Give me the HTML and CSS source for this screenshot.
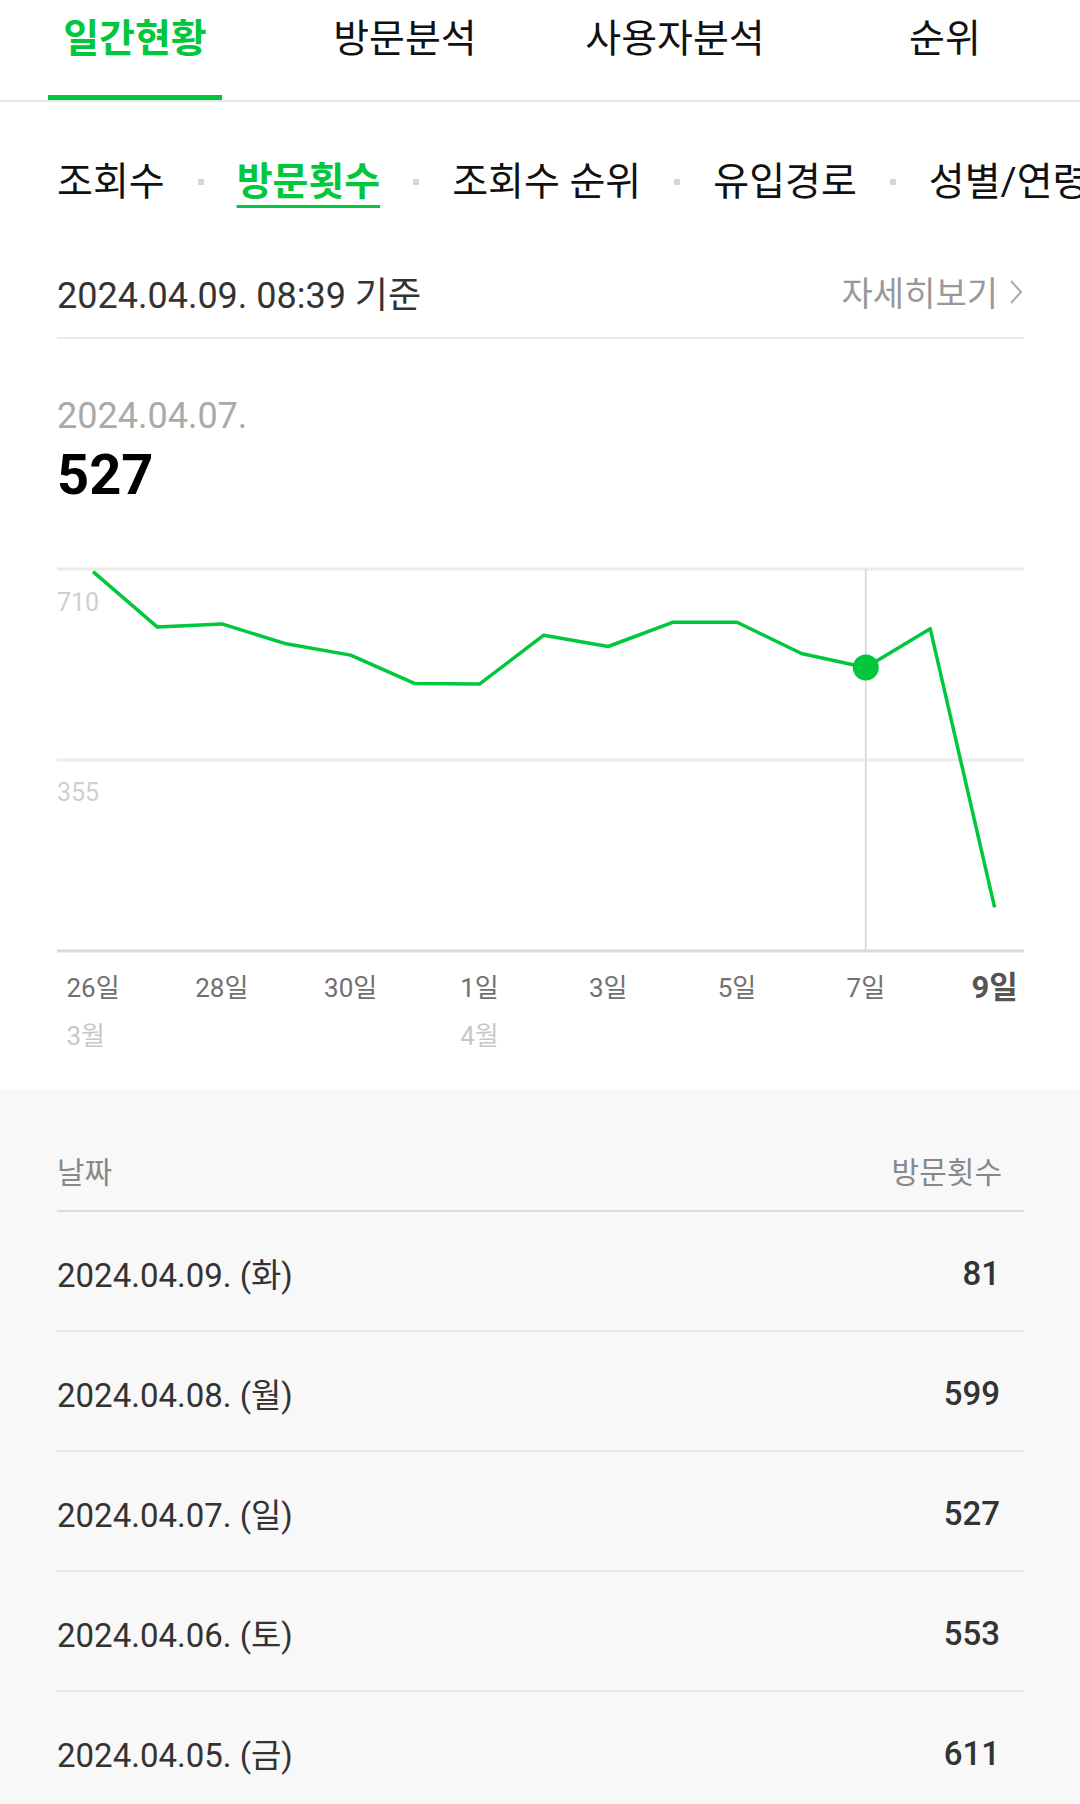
FILE: index.html
```html
<!DOCTYPE html>
<html lang="ko">
<head>
    <meta charset="UTF-8">
    <meta name="viewport" content="width=device-width, initial-scale=1.0">
    <title>일간현황 - 방문횟수</title>
    <link rel="stylesheet" href="styles.css">
</head>
<body>
    <nav class="main-tabs">
        <a class="main-tab active"><span>일간현황</span></a>
        <a class="main-tab"><span>방문분석</span></a>
        <a class="main-tab"><span>사용자분석</span></a>
        <a class="main-tab"><span>순위</span></a>
    </nav>

    <div class="sub-tabs">
        <span class="sub-tab">조회수</span>
        <i class="sub-sep"></i>
        <span class="sub-tab active">방문횟수</span>
        <i class="sub-sep"></i>
        <span class="sub-tab">조회수 순위</span>
        <i class="sub-sep"></i>
        <span class="sub-tab">유입경로</span>
        <i class="sub-sep"></i>
        <span class="sub-tab">성별/연령</span>
    </div>

    <section class="summary">
        <div class="basis-row">
            <span class="basis">2024.04.09. 08:39 기준</span>
            <a class="more">자세히보기
                <svg class="chevron" width="16" height="28" viewBox="0 0 16 28">
                    <path d="M3 3 L13 14 L3 25" fill="none" stroke="#aaa" stroke-width="2"/>
                </svg>
            </a>
        </div>

        <div class="selected">
            <div class="sel-date">2024.04.07.</div>
            <div class="sel-value">527</div>
        </div>

        <div class="chart">
            <svg class="chart-svg" width="967" height="395" viewBox="0 0 967 395">
                <line class="grid" x1="0" y1="10" x2="967" y2="10"/>
                <line class="grid" x1="0" y1="201" x2="967" y2="201"/>
                <text class="y-label" x="0" y="52">710</text>
                <text class="y-label" x="0" y="242">355</text>
                <line class="marker" x1="808.8" y1="10" x2="808.8" y2="392"/>
                <line class="axis" x1="0" y1="392" x2="967" y2="392"/>
                <polyline class="trend" points="36,12.7 100.4,68.1 164.8,64.9 229.2,84.8 293.6,96.1 358,124.6 422.4,125.1 486.8,76.2 551.2,87.5 615.6,63.3 680,63.3 744.4,94.5 808.8,108.5 873.2,69.7 937.6,348.4"/>
                <circle class="point" cx="808.8" cy="108.5" r="13"/>
            </svg>

            <div class="x-axis">
                <div class="x-label"><span class="day">26일</span><span class="month">3월</span></div>
                <div class="x-label"><span class="day">28일</span></div>
                <div class="x-label"><span class="day">30일</span></div>
                <div class="x-label"><span class="day">1일</span><span class="month">4월</span></div>
                <div class="x-label"><span class="day">3일</span></div>
                <div class="x-label"><span class="day">5일</span></div>
                <div class="x-label"><span class="day">7일</span></div>
                <div class="x-label"><span class="day today">9일</span></div>
            </div>
        </div>
    </section>

    <section class="stats">
        <div class="stats-head">
            <span>날짜</span>
            <span>방문횟수</span>
        </div>
        <div class="stats-row"><span>2024.04.09. (화)</span><span class="num">81</span></div>
        <div class="stats-row"><span>2024.04.08. (월)</span><span class="num">599</span></div>
        <div class="stats-row"><span>2024.04.07. (일)</span><span class="num">527</span></div>
        <div class="stats-row"><span>2024.04.06. (토)</span><span class="num">553</span></div>
        <div class="stats-row"><span>2024.04.05. (금)</span><span class="num">611</span></div>
    </section>
</body>
</html>
```

FILE: styles.css
```css
:root {
    --green: #00c73c;
    --text: #111;
    --text-sub: #333;
    --muted: #999;
    --line: #ebebeb;
}

body {
    margin: 0;
    font-family: Roboto, "Noto Sans CJK KR", sans-serif;
    color: var(--text);
    background: #fff;
    overflow: hidden;
}

a {
    color: inherit;
    text-decoration: none;
}

/* Main tabs */
.main-tabs {
    display: grid;
    grid-template-columns: repeat(4, 270px);
    border-bottom: 2px solid #e6e6e6;
}

.main-tab {
    display: flex;
    justify-content: center;
}

.main-tab span {
    box-sizing: border-box;
    height: 100px;
    padding: 18px 15px 0;
    font-size: 39px;
    line-height: 42px;
    border-bottom: 5px solid transparent;
}

.main-tab.active span {
    color: var(--green);
    font-weight: 700;
    border-bottom-color: var(--green);
}

/* Sub tabs */
.sub-tabs {
    display: flex;
    align-items: center;
    gap: 33px;
    height: 130px;
    box-sizing: border-box;
    padding: 59px 0 29px 57px;
    white-space: nowrap;
    overflow: hidden;
}

.sub-tab {
    flex: none;
    font-size: 39px;
    line-height: 42px;
}

.sub-tab.active {
    color: var(--green);
    font-weight: 700;
    text-decoration: underline;
    text-decoration-thickness: 3px;
    text-underline-offset: 10px;
}

.sub-sep {
    flex: none;
    width: 6px;
    height: 6px;
    background: #d6d6d6;
}

/* Summary + chart */
.summary {
    padding: 0 56px 0 57px;
}

.basis-row {
    display: flex;
    justify-content: space-between;
    align-items: center;
    height: 107px;
    padding-top: 14px;
    box-sizing: border-box;
    border-bottom: 2px solid var(--line);
}

.basis {
    font-size: 36px;
    color: var(--text-sub);
}

.more {
    display: flex;
    align-items: center;
    gap: 10px;
    font-size: 34px;
    color: var(--muted);
}

.chevron {
    display: block;
}

.selected {
    padding-top: 56px;
}

.sel-date {
    font-size: 36px;
    line-height: 42px;
    color: #aaa;
}

.sel-value {
    margin-top: 8px;
    font-size: 56px;
    line-height: 60px;
    font-weight: 700;
    color: #000;
}

.chart {
    margin-top: 54px;
}

.chart-svg {
    display: block;
    overflow: visible;
}

.grid {
    stroke: #ececec;
    stroke-width: 3;
}

.axis {
    stroke: #dadada;
    stroke-width: 3;
}

.marker {
    stroke: #dcdcdc;
    stroke-width: 2;
}

.y-label {
    font-family: Roboto, sans-serif;
    font-size: 25px;
    fill: #cfcfcf;
}

.trend {
    fill: none;
    stroke: var(--green);
    stroke-width: 3.5;
    stroke-linejoin: round;
}

.point {
    fill: var(--green);
}

.x-axis {
    display: grid;
    grid-template-columns: repeat(8, 128.8px);
    margin: 18px 0 0 -28.4px;
    padding-bottom: 38px;
}

.x-label {
    justify-self: center;
    display: flex;
    flex-direction: column;
    align-items: flex-start;
    gap: 16px;
}

.day {
    font-size: 26px;
    line-height: 32px;
    color: #707070;
}

.day.today {
    font-size: 31px;
    font-weight: 700;
    color: #555;
}

.month {
    font-size: 26px;
    line-height: 32px;
    color: #c8c8c8;
}

/* Stats table */
.stats {
    background: #f8f8f8;
    padding: 0 56px 0 57px;
    min-height: 800px;
}

.stats-head {
    display: flex;
    justify-content: space-between;
    align-items: center;
    height: 122px;
    padding: 40px 22px 0 0;
    box-sizing: border-box;
    border-bottom: 2px solid #dcdcdc;
    font-size: 30px;
    color: #888;
}

.stats-row {
    display: flex;
    justify-content: space-between;
    align-items: center;
    height: 120px;
    padding: 4px 24px 0 0;
    box-sizing: border-box;
    border-bottom: 2px solid #e6e6e6;
    font-size: 33px;
    color: var(--text-sub);
}

.stats-row .num {
    font-weight: 500;
}
```
